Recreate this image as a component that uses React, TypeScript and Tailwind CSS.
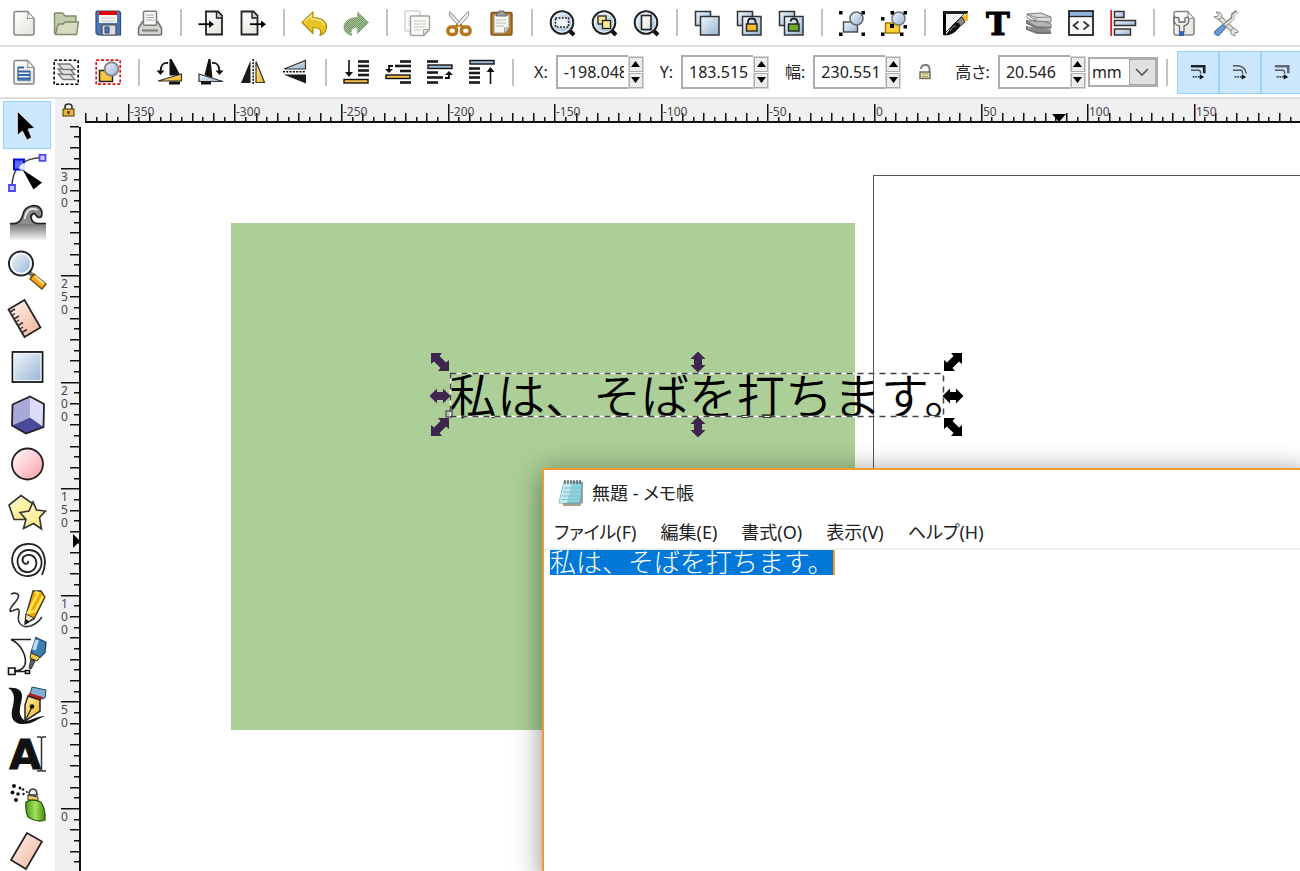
import { useEffect, useRef } from "react";
import type { ReactNode } from "react";

type Tool = { label: string; icon: ReactNode };

const BLACK_DOC = "M14.5 1.5H2.5v23h16v-19z";

function Gradients() {
  return (
    <svg className="absolute h-0 w-0" aria-hidden="true">
      <defs>
        <linearGradient id="sky" x1="0" y1="0" x2="1" y2="1">
          <stop offset="0" stopColor="#f4f8fc" />
          <stop offset="1" stopColor="#94b4d4" />
        </linearGradient>
        <linearGradient id="paper" x1="0" y1="0" x2="1" y2="1">
          <stop offset="0" stopColor="#ffffff" />
          <stop offset="1" stopColor="#e2e2dd" />
        </linearGradient>
        <linearGradient id="gold" x1="0" y1="0" x2="1" y2="1">
          <stop offset="0" stopColor="#fff0a0" />
          <stop offset="1" stopColor="#f0b020" />
        </linearGradient>
        <linearGradient id="lemon" x1="0" y1="0" x2="1" y2="1">
          <stop offset="0" stopColor="#fffbe0" />
          <stop offset="1" stopColor="#ffe867" />
        </linearGradient>
        <linearGradient id="rose" x1="0" y1="0" x2="1" y2="1">
          <stop offset="0" stopColor="#ffffff" />
          <stop offset="1" stopColor="#ff9ba6" />
        </linearGradient>
        <linearGradient id="skin" x1="0" y1="0" x2="1" y2="1">
          <stop offset="0" stopColor="#fff3ec" />
          <stop offset="1" stopColor="#f0b39c" />
        </linearGradient>
        <linearGradient id="fade" x1="0" y1="0" x2="0" y2="1">
          <stop offset="0" stopColor="#777777" />
          <stop offset="1" stopColor="#f4f4f4" />
        </linearGradient>
        <linearGradient id="ink" x1="0" y1="0" x2="1" y2="0">
          <stop offset="0" stopColor="#000000" />
          <stop offset="1" stopColor="#4a4a4a" />
        </linearGradient>
        <linearGradient id="grass" x1="0" y1="0" x2="1" y2="0">
          <stop offset="0" stopColor="#4f9a1c" />
          <stop offset="0.5" stopColor="#a4e060" />
          <stop offset="1" stopColor="#3f8a10" />
        </linearGradient>
        <pattern id="dither" width="2" height="2" patternUnits="userSpaceOnUse">
          <rect width="2" height="2" fill="#a9c49c" />
          <rect width="1" height="1" fill="#6f9560" />
          <rect x="1" y="1" width="1" height="1" fill="#6f9560" />
        </pattern>
      </defs>
    </svg>
  );
}

function Icon({ children }: { children: ReactNode }) {
  return (
    <svg viewBox="0 0 26 26" className="h-[26px] w-[26px] shrink-0 overflow-visible" fill="none" aria-hidden="true">
      {children}
    </svg>
  );
}

function Lens({ children }: { children: ReactNode }) {
  return (
    <Icon>
      <path d="M20 20l5 5" stroke="#111" strokeWidth="4" />
      <circle cx="13" cy="12.5" r="11.3" fill="url(#sky)" stroke="#222" strokeWidth="2" />
      <circle cx="13" cy="12.5" r="9.6" stroke="#eef4fa" strokeWidth="1" />
      {children}
    </Icon>
  );
}

function Stacked({ children }: { children?: ReactNode }) {
  return (
    <Icon>
      <rect x="1.5" y="1.5" width="15" height="14" fill="url(#sky)" stroke="#333" strokeWidth="1.5" />
      <rect x="6.5" y="6.5" width="18.5" height="18.5" fill="url(#sky)" stroke="#333" strokeWidth="1.5" />
      {children}
    </Icon>
  );
}

function GreyPage({ children }: { children?: ReactNode }) {
  return (
    <>
      <path d="M4.5 1.5h12l6.5 7V23.5a1.5 1.5 0 0 1-1.5 1.5h-17A1.5 1.5 0 0 1 3 23.5V3a1.5 1.5 0 0 1 1.5-1.5z" fill="url(#paper)" stroke="#85857f" strokeWidth="1.5" />
      <path d="M16.5 2c1 2.5.5 4.5-.5 7 2.5-1 4.5-1 7 0" fill="#fff" stroke="#85857f" />
      {children}
    </>
  );
}

const commandGroups: Tool[][] = [
  [
    { label: "新規", icon: <Icon><GreyPage /></Icon> },
    {
      label: "開く",
      icon: (
        <Icon>
          <path d="M1.5 23V4q0-1 1-1h7l2.5 3h11v17z" fill="#c3ccab" stroke="#7f8a6a" strokeWidth="1.4" />
          <path d="M6 14h4l2-2h13.5l-2 12.5H2.5L4.5 16z" fill="#d5dcc0" stroke="#7f8a6a" strokeWidth="1.4" />
        </Icon>
      ),
    },
    {
      label: "保存",
      icon: (
        <Icon>
          <path d="M2 1h22l1.5 1.5V25H3l-2-2V2z" fill="#4d74b5" stroke="#2c4a80" strokeWidth="1.2" />
          <path d="M4 1h18v12H4z" fill="#f3f3f3" />
          <path d="M4 1h18v4H4z" fill="#dc0a0a" />
          <path d="M6 8h14M6 11h14" stroke="#ccc" />
          <path d="M7 15h14v10H7z" fill="#dcdcdc" stroke="#4b4b4b" strokeWidth="1.2" />
          <path d="M10 17h4v6h-4z" fill="#4d74b5" stroke="#2c4a80" />
        </Icon>
      ),
    },
    {
      label: "印刷",
      icon: (
        <Icon>
          <path d="M1.5 18l4-6.5h15l4 6.5v6q0 1-1 1h-21q-1 0-1-1z" fill="#d4d4d0" stroke="#6f6f6b" strokeWidth="1.5" />
          <rect x="6.5" y="1.2" width="13" height="14" rx="1" fill="#f8f8f8" stroke="#7b7b77" strokeWidth="1.5" />
          <path d="M9 5h8M9 7.5h8M9 10h8" stroke="#aaa" />
          <path d="M5 20.5h16" stroke="#7d7d79" strokeWidth="2" />
        </Icon>
      ),
    },
  ],
  [
    {
      label: "インポート",
      icon: (
        <Icon>
          <g transform="translate(5.5 0)">
            <path d={BLACK_DOC} fill="url(#paper)" stroke="#222" strokeWidth="1.8" />
            <path d="M13 2v6h6" stroke="#222" fill="#ccc" strokeWidth="1.4" />
          </g>
          <path d="M.5 14.2h12" stroke="#000" strokeWidth="1.8" />
          <path d="M11 10.5l5 3.7-5 3.7z" fill="#000" />
        </Icon>
      ),
    },
    {
      label: "エクスポート",
      icon: (
        <Icon>
          <g transform="translate(-1 0)">
            <path d={BLACK_DOC} fill="url(#paper)" stroke="#222" strokeWidth="1.8" />
            <path d="M13 2v6h6" stroke="#222" fill="#ccc" strokeWidth="1.4" />
          </g>
          <path d="M10 14.2h12" stroke="#000" strokeWidth="1.8" />
          <path d="M21 10.5l5 3.7-5 3.7z" fill="#000" />
        </Icon>
      ),
    },
  ],
  [
    {
      label: "元に戻す",
      icon: (
        <Icon>
          <path d="M1 12.5L12 2v5.5c9 0 14 4.5 13.5 10.5-.4 4-3 6-6.5 7.5 2-4 1-8-7-8v6z" fill="#e8c522" stroke="#a98d10" strokeWidth="1.2" strokeLinejoin="round" />
          <path d="M3 12l7.5-7v4c6 0 11 1 13 6" stroke="#f7e58a" strokeWidth="1.3" />
        </Icon>
      ),
    },
    {
      label: "やり直す",
      icon: (
        <Icon>
          <path d="M25.5 12.5L14.5 2v5.5c-9 0-14 4.5-13.5 10.5.4 4 3 6 8 7.5-2-4-1-8 5.5-8v6z" fill="url(#dither)" stroke="#7ea070" strokeDasharray="1.5 1" />
        </Icon>
      ),
    },
  ],
  [
    {
      label: "コピー",
      icon: (
        <Icon>
          <rect x="1" y="1" width="15" height="20" rx="1" fill="#fafafa" stroke="#d3d3d0" strokeWidth="1.5" />
          <path d="M4 8h3M4 11h3M4 14h3" stroke="#ddd" />
          <path d="M7.5 6h17q1 0 1 1v12.5L20 25.5H7.5q-1 0-1-1V7q0-1 1-1z" fill="#fbfbfa" stroke="#a3a39d" strokeWidth="1.5" />
          <path d="M10 11h12M10 14h12M10 17h12M10 20h7" stroke="#c2c2be" />
          <path d="M25 19.5h-5.5v5.5z" fill="#e3e3e0" stroke="#a3a39d" />
        </Icon>
      ),
    },
    {
      label: "切り取り",
      icon: (
        <Icon>
          <path d="M4 1.5c-2 3 0 6 9.5 15l2-2z" fill="#e5e5e5" stroke="#8a8a8a" />
          <path d="M22 1.5c2 3 0 6-9.5 15l-2-2z" fill="#f4f4f4" stroke="#8a8a8a" />
          <rect x="2" y="17" width="8.5" height="7.5" rx="3" stroke="#b8751a" strokeWidth="3.5" />
          <rect x="15.5" y="17" width="8.5" height="7.5" rx="3" stroke="#b8751a" strokeWidth="3.5" />
          <path d="M9 17.5l3-3M17 17.5l-3-3" stroke="#b8751a" strokeWidth="2.5" />
        </Icon>
      ),
    },
    {
      label: "貼り付け",
      icon: (
        <Icon>
          <rect x="3" y="2.5" width="21" height="22.5" rx="1.5" fill="#b8771f" stroke="#875310" strokeWidth="1.4" />
          <path d="M6 5h15v13l-4.5 5H6z" fill="#f5f5f3" stroke="#999" />
          <path d="M8 10h10M8 13h10M8 16h8" stroke="#bbb" />
          <path d="M21 18h-4.5v5z" fill="#ddd" stroke="#999" />
          <path d="M8.5 6V3h2.5V1h5v2h2.5v3z" fill="#a0a09c" stroke="#666" />
        </Icon>
      ),
    },
  ],
  [
    {
      label: "選択オブジェクトをズーム",
      icon: <Lens><rect x="6.5" y="8" width="13" height="9" stroke="#111" strokeWidth="1.6" strokeDasharray="1.7 1.5" fill="#f5f8fb" /></Lens>,
    },
    {
      label: "描画全体をズーム",
      icon: (
        <Lens>
          <rect x="7" y="6" width="8" height="8" fill="#ffe98a" stroke="#222" strokeWidth="1.3" />
          <rect x="11.5" y="10.5" width="8" height="8" fill="#ffe98a" stroke="#222" strokeWidth="1.3" />
        </Lens>
      ),
    },
    { label: "ページをズーム", icon: <Lens><rect x="8.5" y="5.5" width="9.5" height="14" fill="url(#paper)" stroke="#222" strokeWidth="1.6" /></Lens> },
  ],
  [
    { label: "複製", icon: <Stacked /> },
    {
      label: "クローンを作成",
      icon: (
        <Stacked>
          <path d="M12 15v-3q0-3.5 3.8-3.5t3.8 3.5v3" stroke="#222" strokeWidth="1.8" />
          <rect x="10.5" y="14" width="10.5" height="7" fill="#f7b930" stroke="#222" strokeWidth="1.4" />
        </Stacked>
      ),
    },
    {
      label: "クローンのリンクを解除",
      icon: (
        <Stacked>
          <path d="M12.5 11.5q.5-3 3.5-3t3.5 3.5v3" stroke="#222" strokeWidth="1.8" />
          <rect x="10.5" y="14" width="10.5" height="7" fill="#6cab34" stroke="#222" strokeWidth="1.4" />
        </Stacked>
      ),
    },
  ],
  [
    {
      label: "グループ化",
      icon: (
        <Icon>
          <rect x="4.5" y="12" width="14" height="10" fill="url(#sky)" stroke="#444" strokeWidth="1.4" />
          <circle cx="17.5" cy="8.5" r="6.5" fill="url(#sky)" stroke="#666" strokeWidth="1.5" />
          <path d="M0 1h3.5v3.5H0zM22.5 1H26v3.5h-3.5zM0 22.5h3.5V26H0zM22.5 22.5H26V26h-3.5z" fill="#000" />
        </Icon>
      ),
    },
    {
      label: "グループ解除",
      icon: (
        <Icon>
          <rect x="4.5" y="13" width="14" height="10" fill="#ffd23c" stroke="#9a7400" strokeWidth="1.4" />
          <circle cx="17.5" cy="8.5" r="6.5" fill="url(#sky)" stroke="#777" strokeWidth="1.5" />
          <path d="M0 7h3.5v3.5H0zM9.5 1H13v3.5H9.5zM22.5 1H26v3.5h-3.5zM0 22.5h3.5V26H0zM19 22.5h3.5V26H19zM22.5 15H26v3.5h-3.5zM9 14h4v4H9z" fill="#000" />
        </Icon>
      ),
    },
  ],
  [
    {
      label: "フィル/ストローク",
      icon: (
        <Icon>
          <path d="M2 24L24 2H2z" fill="#f4f4f4" stroke="#444" />
          <path d="M2.5 25V2.5H25" stroke="url(#ink)" strokeWidth="3" />
          <path d="M2 1h24v3H2z" fill="#222" />
          <path d="M20 7l6-4.5v8L22 12z" fill="#f5b52c" />
          <path d="M15 11l5-4 3 5-4.5 4z" fill="#888" stroke="#333" />
          <path d="M2 25.5c5-2 5-8 11-13 2-1 6 2 5 4C14 22 9 26 2 25.5z" fill="#111" />
          <path d="M8 21c2-3 3-5 6-5" stroke="#888" />
        </Icon>
      ),
    },
    {
      label: "テキストとフォント",
      icon: (
        <Icon>
          <text x="14" y="25" textAnchor="middle" strokeWidth="1" className="fill-black stroke-black font-['DejaVu_Serif',serif] text-[32px] font-bold">T</text>
        </Icon>
      ),
    },
    {
      label: "レイヤー",
      icon: (
        <Icon>
          <path d="M1 17l14-1 10 4v4l-14-1z" fill="#8a8a8a" />
          <path d="M1 11l14-1 10 4v4l-14-1z" fill="#b5b5b5" stroke="#777" />
          <path d="M1 4l14-1 10 4v5l-15-1z" fill="#dadada" stroke="#777" />
          <path d="M1 4l9 3.5 15-.5M10 8v4M1 4v4l9 4" stroke="#888" />
          <path d="M1 10v3l10 4.5h14M1 16v3l10 4h14" stroke="#777" strokeWidth="2" />
        </Icon>
      ),
    },
    {
      label: "XML エディター",
      icon: (
        <Icon>
          <rect x="1" y="1" width="24" height="24" fill="#f7f7f7" stroke="#222" strokeWidth="1.8" />
          <path d="M2 2h22v4H2z" fill="#8fb3dc" />
          <path d="M1 6.5h24" stroke="#222" strokeWidth="1.3" />
          <path d="M10.5 11.5l-5 4 5 4M15.5 11.5l5 4-5 4" stroke="#333" strokeWidth="1.7" />
        </Icon>
      ),
    },
    {
      label: "整列と配置",
      icon: (
        <Icon>
          <path d="M1.2 0v26" stroke="#dc1c24" strokeWidth="1.8" />
          <rect x="4.5" y="1.5" width="9.5" height="6" fill="url(#sky)" stroke="#333" strokeWidth="1.5" />
          <rect x="4.5" y="10.5" width="21" height="5" fill="url(#sky)" stroke="#333" strokeWidth="1.5" />
          <rect x="4.5" y="19" width="16" height="6" fill="url(#sky)" stroke="#333" strokeWidth="1.5" />
        </Icon>
      ),
    },
  ],
  [
    {
      label: "ドキュメントの設定",
      icon: (
        <Icon>
          <GreyPage>
            <path d="M3.5 7c-2 5 1 8 5 9v6h4.5v-6c4.5-1 6-5 4-9l-3 1v4H8V8z" fill="#efefef" stroke="#666" strokeWidth="1.3" />
            <path d="M8 21.5h5V26H8z" fill="#2f62c0" />
          </GreyPage>
        </Icon>
      ),
    },
    {
      label: "環境設定",
      icon: (
        <Icon>
          <path d="M6.5 7.5L20 20.5" stroke="#8b8b87" strokeWidth="5" />
          <path d="M6.5 7.5L20 20.5" stroke="#e4e4e0" strokeWidth="3" />
          <path d="M3 2l4 .5 2 3-1 3-4 1-3-3 3.5 0 1-1.5zM18 20l3-2 4 3v1.5h-3V26l-4-2z" fill="#e4e4e0" stroke="#8b8b87" />
          <path d="M24 1.5l-4 3-.5 4L12 15" stroke="#8b8b87" strokeWidth="4" />
          <path d="M24 2.5l-3.5 2.5L20 9l-8 6" stroke="#e8e8e5" strokeWidth="1.8" />
          <path d="M9.5 14.5l3.5 3-7 8q-5 0-4.5-4z" fill="#6b97d0" stroke="#3f6cab" />
        </Icon>
      ),
    },
  ],
];

function Bars({ y, x, w }: { y: number[]; x: number; w: number }) {
  return (
    <>
      {y.map((v) => (
        <path key={v} d={`M${x} ${v}h${w}`} stroke="#1a1a1a" strokeWidth="2.6" />
      ))}
    </>
  );
}

const selectGroups: Tool[][] = [
  [
    {
      label: "すべて選択",
      icon: (
        <Icon>
          <GreyPage>
            <path d="M7 8.5h6M7 12.5h12M7 16h12M7 19.5h12" stroke="#3464a4" strokeWidth="2" />
            <path d="M7 8v13h12V12" stroke="#3464a4" strokeWidth="1.3" />
          </GreyPage>
        </Icon>
      ),
    },
    {
      label: "全レイヤーを選択",
      icon: (
        <Icon>
          <rect x="1.2" y="1.2" width="24" height="24" stroke="#000" strokeWidth="1.6" strokeDasharray="3 1.8" />
          {[15, 10, 5].map((y) => (
            <path key={y} d={`M5 ${y}h12l5 5.5H10z`} fill="#e3e3e3" stroke="#777" strokeWidth="1.3" />
          ))}
        </Icon>
      ),
    },
    {
      label: "選択を解除",
      icon: (
        <Icon>
          <rect x="1.2" y="1.2" width="24" height="24" stroke="#e01010" strokeWidth="1.7" strokeDasharray="3 1.8" />
          <rect x="4.5" y="11.5" width="13" height="11" fill="#fbc63c" stroke="#222" strokeWidth="1.5" />
          <circle cx="16.5" cy="10" r="6.8" fill="url(#sky)" stroke="#888" strokeWidth="2" />
        </Icon>
      ),
    },
  ],
  [
    {
      label: "反時計回りに回転",
      icon: (
        <Icon>
          <path d="M13.5 0h2l9 16.5h-11z" fill="#111" />
          <path d="M2 22l23.5-7v7z" fill="url(#gold)" stroke="#333" strokeWidth="1.2" />
          <path d="M13 22.5h11v3H13z" fill="#111" />
          <path d="M12 4Q5 3 4.5 12" stroke="#111" strokeWidth="1.8" />
          <path d="M.5 11.5h8l-4 4.5z" fill="#111" />
        </Icon>
      ),
    },
    {
      label: "時計回りに回転",
      icon: (
        <Icon>
          <path d="M12.5 0h-2l-4 16 8 3z" fill="#111" />
          <path d="M1 15v7.5h24z" fill="url(#sky)" stroke="#333" strokeWidth="1.2" />
          <path d="M3 22.5h10v3H3z" fill="#111" />
          <path d="M14 4q7-1 7.5 8" stroke="#111" strokeWidth="1.8" />
          <path d="M25.5 11.5h-8l4 4.5z" fill="#111" />
        </Icon>
      ),
    },
    {
      label: "水平に反転",
      icon: (
        <Icon>
          <path d="M10.5 1.5V24H1z" fill="#1a1a1a" />
          <path d="M16 2.5V23.5h8.5z" fill="url(#gold)" stroke="#333" strokeWidth="1.2" />
          <path d="M13.2 0v26" stroke="#000" strokeWidth="1.5" strokeDasharray="2 1.3" />
        </Icon>
      ),
    },
    {
      label: "垂直に反転",
      icon: (
        <Icon>
          <path d="M23.5 1.5v8.5H2z" fill="url(#sky)" stroke="#333" strokeWidth="1.2" />
          <path d="M24 24.5v-9H1.5z" fill="#1a1a1a" />
          <path d="M1 12.8h23" stroke="#000" strokeWidth="1.5" strokeDasharray="2 1.3" />
        </Icon>
      ),
    },
  ],
  [
    {
      label: "最背面へ",
      icon: (
        <Icon>
          <Bars y={[2.5, 7, 11.5, 16]} x={15} w={11} />
          <path d="M6 1v14" stroke="#111" strokeWidth="1.6" />
          <path d="M2 13h8l-4 5z" fill="#111" />
          <rect x="1" y="20.5" width="24" height="3.5" fill="#f5c042" stroke="#111" strokeWidth="1.4" />
        </Icon>
      ),
    },
    {
      label: "背面へ",
      icon: (
        <Icon>
          <Bars y={[2.5, 12, 23.5]} x={15} w={11} />
          <Bars y={[7]} x={10} w={16} />
          <path d="M8 7H4v4" stroke="#111" strokeWidth="1.8" />
          <path d="M0 10h8l-4 4z" fill="#111" />
          <rect x="1" y="16" width="24" height="3.5" fill="#f5c042" stroke="#111" strokeWidth="1.4" />
        </Icon>
      ),
    },
    {
      label: "前面へ",
      icon: (
        <Icon>
          <Bars y={[2.5, 13.5, 23.5]} x={0} w={11} />
          <Bars y={[18.5]} x={0} w={16} />
          <path d="M18 19h4v-4" stroke="#111" strokeWidth="1.8" />
          <path d="M18 16h8l-4-4z" fill="#111" />
          <rect x="1" y="6" width="24" height="3.5" fill="#9fb8d8" stroke="#111" strokeWidth="1.4" />
        </Icon>
      ),
    },
    {
      label: "最前面へ",
      icon: (
        <Icon>
          <Bars y={[9.5, 14, 18.5, 23.5]} x={0} w={11} />
          <path d="M21.5 11v14" stroke="#111" strokeWidth="1.6" />
          <path d="M17.5 13h8l-4-5z" fill="#111" />
          <rect x="1" y="1.5" width="24" height="3.5" fill="#9fb8d8" stroke="#111" strokeWidth="1.4" />
        </Icon>
      ),
    },
  ],
];

const toolbox: Tool[] = [
  {
    label: "選択ツール",
    icon: <path d="M10.5 6.5V30l5-4 4.5 9 4.5-2.5-3.5-8.5 6.5-1z" fill="#000" stroke="#fff" strokeWidth=".6" />,
  },
  {
    label: "ノードツール",
    icon: (
      <>
        <path d="M5 33Q5 20 12 11 22 4 34 3.5" stroke="#444" strokeWidth="1.5" />
        <path d="M32.5.8h6v6h-6zM2 31h6v6H2z" fill="#c9c9ff" stroke="#4a4ae8" strokeWidth="1.8" />
        <rect x="7" y="5.5" width="10" height="10" fill="#5a6cf5" stroke="#0a0ae0" strokeWidth="2" />
        <path d="M12 15q0-5 6-6v8z" fill="#dfe4ff" />
        <path d="M15.5 15.5l19.5 13-8.5 7z" fill="#000" />
      </>
    ),
  },
  {
    label: "微調整ツール",
    icon: (
      <>
        <path d="M3 22h36v16H3z" fill="url(#fade)" />
        <path d="M3 22c9 1 11-2 13-9 2-10 14-12 18-5 2 4 1 7-2 8-3 0-4-3-4-5-5 3-3 11 4 11h6z" fill="#8c8c8c" />
        <path d="M3 21.5c8 1 11-2 13-9 2-10 14-11 18-5 2 4 1 8-2 8s-3-5-6-4c-4 2-2 10 5 10h8" stroke="#222" strokeWidth="1.7" />
        <path d="M17.5 17c2-9 6-12 13-9" stroke="#eee" strokeWidth="1.6" />
      </>
    ),
  },
  {
    label: "ズームツール",
    icon: (
      <>
        <path d="M22 22l5 5" stroke="#777" strokeWidth="4" />
        <path d="M27 24l12 10-4 5-12-10z" fill="#f5a81c" stroke="#6b4700" strokeWidth="1.3" />
        <path d="M28 26l9 8" stroke="#ffe08a" strokeWidth="2" />
        <circle cx="14" cy="13.5" r="12" fill="url(#sky)" stroke="#222" strokeWidth="2" />
        <circle cx="14" cy="13.5" r="10" stroke="#f6fafd" strokeWidth="1.6" />
      </>
    ),
  },
  {
    label: "メジャーツール",
    icon: (
      <>
        <path d="M1.5 10.5L17.5 1l16 27.5-16 9.5z" fill="url(#skin)" stroke="#222" strokeWidth="1.7" />
        <path d="M3 13l5-3M5 16.5l3-2M7 20l5-3M9 23l3-2M11 26.5l5-3M13 30l3-2M15 33.5l5-3" stroke="#333" strokeWidth="1.5" />
      </>
    ),
  },
  {
    label: "矩形ツール",
    icon: (
      <>
        <rect x="5.5" y="5" width="30" height="30" fill="url(#sky)" stroke="#111" strokeWidth="1.8" />
        <rect x="7" y="6.5" width="27" height="27" stroke="#eaf2fa" strokeWidth="1.2" />
      </>
    ),
  },
  {
    label: "3D ボックスツール",
    icon: (
      <>
        <path d="M5.5 9.5L23 1.5v21L5 30.5z" fill="#a9a9d8" />
        <path d="M23 1.5L37 9v23l-14-9.5z" fill="#dcdcfa" />
        <path d="M5 30.5L23 22.5 36.5 32 19 38.5z" fill="#4a4a9c" />
        <path d="M23 1.5L37 9l-.5 23L19 38.5l-14-8 .5-21z" stroke="#222" strokeWidth="1.8" />
      </>
    ),
  },
  {
    label: "円/弧ツール",
    icon: <circle cx="20.5" cy="20" r="15.5" fill="url(#rose)" stroke="#222" strokeWidth="1.8" />,
  },
  {
    label: "星形ツール",
    icon: (
      <>
        <path d="M14 3.5l13 9-4 15H7L2 13z" fill="url(#lemon)" stroke="#333" strokeWidth="1.6" />
        <path d="M26 10l3.5 8 9 1-6 6.5 2 11.5-8-5.5-10 5 2.5-9-6-7 9-1.5z" fill="url(#lemon)" stroke="#333" strokeWidth="1.6" />
      </>
    ),
  },
  {
    label: "らせんツール",
    icon: (
      <path d="M20 20c1 3-3 4-5 1-2-4 2-8 7-7 6 1 8 8 5 13-4 6-13 5-16-1-4-8 1-17 10-17 11 0 15 11 11 19-5 9-18 9-24 2C0 19 5 4 19 3c16-1 22 15 15 31" transform="translate(1 0)" stroke="#222" strokeWidth="1.8" />
    ),
  },
  {
    label: "鉛筆ツール",
    icon: (
      <>
        <path d="M4 5c5-2 9 0 7 4-2 5-8 8-8 13 0 2 8-4 9-1 1 2-2 8 0 12 4 8 16 5 23-5" stroke="#333" strokeWidth="1.6" />
        <path d="M26 2h8l4 6-11 22-9 5 1-9z" fill="#f5a30c" stroke="#333" strokeWidth="1.3" />
        <path d="M28 3l3 1-10 20 7-2L36 7" stroke="#ffe94f" strokeWidth="2.5" />
        <path d="M19 25l8 4-9 6z" fill="#fbe0b0" stroke="#333" />
        <path d="M18.5 30l4 2.5-4 3z" fill="#111" />
      </>
    ),
  },
  {
    label: "ペンツール",
    icon: (
      <>
        <path d="M4 2.5h20M4 2.5c11 5 16 18 14 25-2 6-7 6-12 7h16" stroke="#222" strokeWidth="1.6" />
        <path d="M1.5 31h6.5v6.5H1.5zM18.5 33.5h4v3h-4z" fill="#fff" stroke="#111" strokeWidth="1.6" />
        <path d="M29 .5l10 5-1 10-5 5-9-5z" fill="#3d7fae" stroke="#1d4664" strokeWidth="1.3" />
        <path d="M30 3l-3 10" stroke="#b5dbf0" strokeWidth="4" />
        <path d="M24 16l9 4-3 4-7-3z" fill="#f7c846" stroke="#333" />
        <path d="M24 22l4 2-4 8-2-1z" fill="#666" stroke="#222" />
      </>
    ),
  },
  {
    label: "カリグラフィツール",
    icon: (
      <>
        <path d="M1 2c9-1 14 2 14 8 0 8-6 17 2 24 4 3 12-4 21-4-8 3-12 8-22 8C5 38 3 30 6 20 8 11 7 5 1 2z" fill="#111" />
        <path d="M25 1l14 3-1 8-4 1-11-5z" fill="#7fb0d4" stroke="#1d4664" />
        <path d="M22 7l14 4-3 4-12-4z" fill="#b51c1c" />
        <path d="M21 10l12 4v11L18 35V19z" fill="url(#gold)" stroke="#222" strokeWidth="1.5" />
        <path d="M18.5 34l6-12" stroke="#222" strokeWidth="1.3" />
        <circle cx="25" cy="20.5" r="2.3" fill="#111" />
      </>
    ),
  },
  {
    label: "テキストツール",
    icon: (
      <>
        <text x="18" y="35" textAnchor="middle" className="fill-[#111] stroke-[#111] font-['DejaVu_Sans',sans-serif] text-[41px] font-bold">A</text>
        <path d="M30 3h3.5l1 1 1-1H39M30 37h3.5l1-1 1 1H39M34.5 4v32" stroke="#333" strokeWidth="1.5" />
      </>
    ),
  },
  {
    label: "スプレーツール",
    icon: (
      <>
        <g fill="#111">
          <circle cx="7" cy="4" r="2" />
          <circle cx="13" cy="6" r="1.5" />
          <circle cx="5.5" cy="10.5" r="2" />
          <circle cx="11" cy="12" r="1.8" />
          <circle cx="16" cy="7.5" r="1.2" />
          <circle cx="16.5" cy="12" r="1.2" />
          <circle cx="9" cy="18" r="2" />
          <circle cx="20" cy="10" r="1" />
        </g>
        <path d="M22 13q0-6 4-6t4 6z" fill="#eee" stroke="#333" strokeWidth="1.6" />
        <path d="M21 13l10 2v4l-10-1z" fill="#f5c860" stroke="#333" />
        <path d="M19 20q6-4 15 0 5 8 4 18-7 3-17-3-3-7-2-15z" fill="url(#grass)" stroke="#2c5c0c" strokeWidth="1.3" />
      </>
    ),
  },
  {
    label: "消しゴムツール",
    icon: <path d="M20 2l15 8.5-16 27.5L4 29z" fill="url(#skin)" stroke="#222" strokeWidth="1.7" />,
  },
];

function ToolGroup({ tools }: { tools: Tool[] }) {
  return (
    <div className="flex">
      {tools.map((t) => (
        <button key={t.label} type="button" aria-label={t.label} className="flex h-[42px] w-[42px] items-center justify-center">
          {t.icon}
        </button>
      ))}
    </div>
  );
}

function Divider() {
  return (
    <div className="flex w-[19px] shrink-0 justify-center">
      <span className="h-[27px] w-[2px] bg-[#c3c3c3]" />
    </div>
  );
}

function NumberField({ id, label, value }: { id: string; label: string; value: string }) {
  return (
    <div className="flex shrink-0 items-center">
      <label htmlFor={id} className="mr-2 whitespace-nowrap [font-feature-settings:'palt']">{label}</label>
      <div className="h-[34px] w-[72px] border-2 border-r-0 border-[#abadb3] bg-white px-1">
        <input id={id} defaultValue={value} className="h-full w-full bg-transparent pl-0.5 outline-none" />
      </div>
      <div className="flex w-4 flex-col gap-px border border-[#d5d5d5]">
        <button type="button" aria-label={`${label} 増やす`} className="flex h-[15px] items-center justify-center border border-[#adadad] bg-[#ececec]">
          <svg viewBox="0 0 9 6" className="h-1.5 w-[9px]"><path d="M4.5 0L9 6H0z" /></svg>
        </button>
        <button type="button" aria-label={`${label} 減らす`} className="flex h-[15px] items-center justify-center border border-[#adadad] bg-[#ececec]">
          <svg viewBox="0 0 9 6" className="h-1.5 w-[9px]"><path d="M4.5 6L9 0H0z" /></svg>
        </button>
      </div>
    </div>
  );
}

const snapButtons = [
  { label: "線幅を拡大縮小", path: <path d="M1 2.5h15v8" stroke="#222" strokeWidth="3" /> },
  { label: "角丸を拡大縮小", path: <path d="M1 2h6q8 1 9 9" stroke="#555" strokeWidth="1.5" /> },
  { label: "グラデーションを変形", path: <path d="M1 2.5h15v8" stroke="#667" strokeWidth="3" /> },
];

// 50 units span 106.6px on both rulers
const STEP = 10.66;

function HorizontalRuler() {
  const origin = 793;
  const ticks = Array.from({ length: 114 }, (_, i) => i - 74);
  return (
    <svg className="h-6 w-full" aria-hidden="true">
      <path d="M4 23h3000" stroke="#111" strokeWidth="2" />
      {ticks.map((k) => {
        const x = Math.round(origin + k * STEP);
        const h = k % 10 === 0 ? 18 : k % 2 === 0 ? 9 : 5;
        return <rect key={k} x={x} y={23 - h} width="1.5" height={h} fill="#111" />;
      })}
      {ticks.filter((k) => k % 10 === 0).map((k) => (
        <text key={k} x={Math.round(origin + k * STEP) + 2} y="17" className="fill-[#4a4452] text-[12px]">{k * 5}</text>
      ))}
      <path d="M971 15h14l-7 8z" fill="#000" />
    </svg>
  );
}

function VerticalRuler() {
  const origin = 686;
  const ticks = Array.from({ length: 70 }, (_, i) => 64 - i);
  return (
    <svg className="h-full w-[26px] shrink-0 bg-[#f0f0f0]" aria-hidden="true">
      <path d="M25 4v3000" stroke="#111" strokeWidth="2" />
      {ticks.map((k) => {
        const y = Math.round(origin - k * STEP);
        const w = k % 10 === 0 ? 18 : k % 2 === 0 ? 9 : 5;
        return <rect key={k} x={24 - w} y={y - 1} width={w} height="1.5" fill="#111" />;
      })}
      {ticks.filter((k) => k % 10 === 0).map((k) =>
        String(k * 5).split("").map((d, i) => (
          <text key={`${k}-${i}`} x="6" y={Math.round(origin - k * STEP) + 12 + i * 13} className="fill-[#4a4452] text-[12px]">{d}</text>
        )),
      )}
      <path d="M18 411v14l7-7z" fill="#000" />
    </svg>
  );
}

const DIAGONAL = "M-9-9H2L-.5-6 6 .5 9-2V9H-2L.5 6-6-.5-9 2z";
const STRAIGHT = "M0-10.5L7.5-3H4V3h3.5L0 10.5-7.5 3H-4v-6h-3.5z";

function SelectionFrame() {
  return (
    <svg className="absolute inset-0 h-full w-full" fill="none" aria-hidden="true">
      <rect x="369.5" y="250.5" width="493" height="43" stroke="#fff" strokeWidth="1.5" />
      <rect x="369.5" y="250.5" width="493" height="43" stroke="#444" strokeWidth="1.5" strokeDasharray="6 5" />
      <rect x="365" y="288" width="6" height="6" stroke="#3f2450" />
      <g fill="#3f2450">
        <path d={DIAGONAL} transform="translate(359 239)" />
        <path d={DIAGONAL} transform="translate(359 304) scale(1 -1)" />
        <path d={STRAIGHT} transform="translate(359 273) rotate(90)" />
        <path d={STRAIGHT} transform="translate(617 239)" />
        <path d={STRAIGHT} transform="translate(617 304)" />
      </g>
      <g fill="#000">
        <path d={DIAGONAL} transform="translate(872 239) scale(1 -1)" />
        <path d={DIAGONAL} transform="translate(872 304)" />
        <path d={STRAIGHT} transform="translate(872 273) rotate(90)" />
      </g>
    </svg>
  );
}

const menus = ["ファイル(F)", "編集(E)", "書式(O)", "表示(V)", "ヘルプ(H)"];

function Notepad() {
  const body = useRef<HTMLTextAreaElement>(null);

  useEffect(() => {
    body.current?.focus();
    body.current?.select();
  }, []);

  return (
    <section className="absolute -right-2 -bottom-2 left-[461px] top-[345px] flex flex-col border-2 border-[#f39a2d] bg-white shadow-[0_4px_26px_rgba(0,0,0,0.45)]">
      <header className="flex h-[46px] items-center gap-2 pl-3.5">
        <svg viewBox="0 0 26 28" className="h-7 w-[26px]" fill="none" aria-hidden="true">
          <path d="M6 3h19v20l-3 4H5z" fill="#a99f86" />
          <path d="M6 3h18l-1.5 21H1z" fill="#8fd0de" stroke="#5fa4b5" />
          <path d="M6 3h8L9 24H1z" fill="#c3e9f0" />
          <path d="M6 9h16M5 13h16M4.5 17h17M3.5 20.5h18" stroke="#7fc0ce" />
          <path d="M7 1v4M10 1v4M13 1v4M16 1v4M19 1v4M22 1v4" stroke="#555" strokeWidth="1.3" />
        </svg>
        <h1 className="text-[18px] [font-feature-settings:'palt']">無題 - メモ帳</h1>
      </header>
      <nav className="flex h-[34px] items-center gap-6 border-b-2 border-[#f0f0f0] pl-2.5">
        {menus.map((m) => (
          <button key={m} type="button" className="text-[18px] [font-feature-settings:'palt']">{m}</button>
        ))}
      </nav>
      <textarea
        ref={body}
        rows={1}
        aria-label="本文"
        defaultValue="私は、そばを打ちます。"
        spellCheck={false}
        className="field-sizing-content ml-1.5 min-h-[25px] max-w-full resize-none self-start overflow-hidden border-r-2 border-[#f39a2d] font-['Noto_Sans_CJK_JP',sans-serif] text-[26px] leading-[22px] font-light outline-none selection:bg-[#0078d7] selection:text-white"
      />
    </section>
  );
}

export default function App() {
  return (
    <div className="flex h-screen flex-col overflow-hidden bg-white font-['Noto_Sans','Noto_Sans_CJK_JP',sans-serif] text-[16px] text-[#222]">
      <Gradients />
      <div role="toolbar" aria-label="コマンドバー" className="flex h-[47px] shrink-0 items-center border-b-2 border-[#dfdfdf] pl-[3px]">
        {commandGroups.map((g, i) => (
          <div key={g[0].label} className="flex shrink-0 items-center">
            {i > 0 && <Divider />}
            <ToolGroup tools={g} />
          </div>
        ))}
      </div>
      <div role="toolbar" aria-label="ツールコントロールバー" className="flex h-[52px] shrink-0 items-center border-b-2 border-[#dfdfdf] pl-[3px]">
        {selectGroups.map((g) => (
          <div key={g[0].label} className="flex shrink-0 items-center">
            <ToolGroup tools={g} />
            <Divider />
          </div>
        ))}
        <div className="ml-3 flex shrink-0 items-center gap-4">
          <NumberField id="x" label="X:" value="-198.048" />
          <NumberField id="y" label="Y:" value="183.515" />
          <NumberField id="width" label="幅:" value="230.551" />
          <button type="button" aria-label="縦横比を固定" className="mr-1.5 flex w-4 justify-center">
            <svg viewBox="0 0 14 16" className="h-4 w-3.5" fill="none">
              <path d="M3 5q0-4 4.5-4 4 0 4 4v3" stroke="#777" strokeWidth="1.8" />
              <rect x="2" y="8" width="10" height="6.5" fill="#e8dfa0" stroke="#666" strokeWidth="1.4" />
              <path d="M4 10h6M4 12.5h6" stroke="#a79c50" />
            </svg>
          </button>
          <NumberField id="height" label="高さ:" value="20.546" />
        </div>
        <div className="relative ml-0.5 h-[30px] w-[70px] shrink-0 border-2 border-[#adadad] bg-white">
          <select aria-label="単位" className="h-full w-full appearance-none pl-0.5 leading-none outline-none">
            <option>mm</option>
            <option>px</option>
          </select>
          <span className="pointer-events-none absolute inset-y-0 right-0 flex w-[27px] items-center justify-center border border-[#adadad] bg-[#e1e1e1]">
            <svg viewBox="0 0 14 8" className="h-2 w-3.5" fill="none"><path d="M1 1l6 6 6-6" stroke="#555" strokeWidth="1.6" /></svg>
          </span>
        </div>
        <Divider />
        <div className="flex shrink-0">
          {snapButtons.map((s) => (
            <button key={s.label} type="button" aria-label={s.label} className="flex h-[43px] w-[42px] items-center justify-center border border-[#99d1ff] bg-[#cce8ff]">
              <svg viewBox="0 0 18 18" className="h-4 w-4" fill="none">
                {s.path}
                <path d="M1 7h9q2 0 2 4" stroke="#555" strokeWidth="1.5" />
                <path d="M3 14.5h8" stroke="#111" strokeWidth="1.5" strokeDasharray="2 1" />
                <path d="M11 11.5l5 3-5 3z" fill="#111" />
              </svg>
            </button>
          ))}
        </div>
      </div>
      <div className="flex min-h-0 flex-1">
        <div role="toolbar" aria-label="ツールボックス" className="-mb-1 flex w-[55px] shrink-0 flex-col pl-[3px] pt-0.5">
          {toolbox.map((t, i) => (
            <button
              key={t.label}
              type="button"
              aria-label={t.label}
              className={`flex min-h-0 w-12 flex-1 basis-0 items-center justify-center border ${i === 0 ? "border-[#99d1ff] bg-[#cce8ff]" : "border-transparent"}`}
            >
              <svg viewBox="0 0 40 40" className="h-10 w-10 shrink-0 overflow-visible" fill="none" aria-hidden="true">{t.icon}</svg>
            </button>
          ))}
        </div>
        <div className="flex min-w-0 flex-1 flex-col">
          <div className="flex h-6 shrink-0 bg-[#f0f0f0]">
            <button type="button" aria-label="ガイドをロック" className="flex w-[26px] shrink-0 justify-center pt-1">
              <svg viewBox="0 0 13 14" className="h-3.5 w-[13px]" fill="none">
                <path d="M3 7V4q0-3 3.5-3T10 4v3" stroke="#333" strokeWidth="1.7" />
                <rect x="1" y="6" width="11" height="7" fill="#eab43c" stroke="#4a3305" />
                <path d="M6.5 8v3" stroke="#3b2a00" strokeWidth="2" />
              </svg>
            </button>
            <HorizontalRuler />
          </div>
          <div className="flex min-h-0 flex-1">
            <VerticalRuler />
            <main className="relative min-w-0 flex-1 overflow-hidden bg-white">
              <div className="absolute left-[150px] top-[100px] h-[507px] w-[624px] bg-[#abcf97]" />
              <div className="absolute -bottom-4 -right-4 left-[792px] top-[52px] border border-[#555]" />
              <p className="absolute left-[368px] top-[246px] whitespace-nowrap font-['Noto_Sans_CJK_JP',sans-serif] text-[48px] leading-none font-[350] text-black">
                私は、そばを打ちます。
              </p>
              <SelectionFrame />
              <Notepad />
            </main>
          </div>
        </div>
      </div>
    </div>
  );
}
